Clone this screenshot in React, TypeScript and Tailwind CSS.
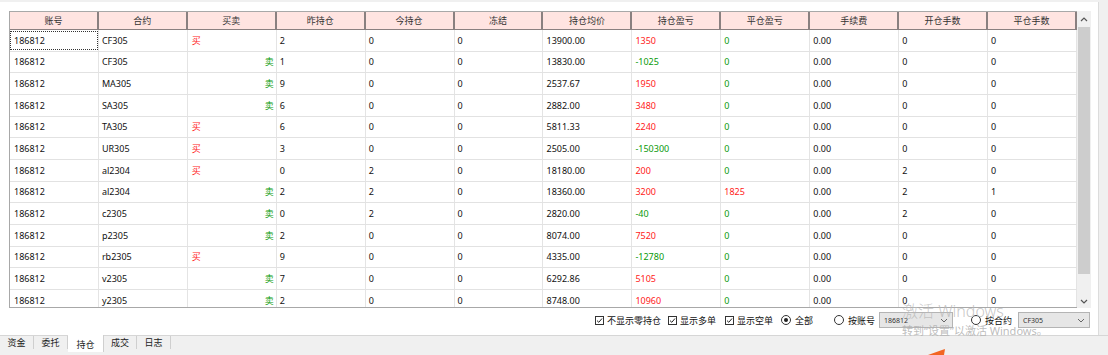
import React from "react";

type Row = {
  acc: string;
  code: string;
  side: "买" | "卖";
  yd: string;
  td: string;
  frz: string;
  avg: string;
  pnl: string;
  cpnl: string;
  fee: string;
  open: string;
  close: string;
};

const rows: Row[] = [
  { acc: "186812", code: "CF305", side: "买", yd: "2", td: "0", frz: "0", avg: "13900.00", pnl: "1350", cpnl: "0", fee: "0.00", open: "0", close: "0" },
  { acc: "186812", code: "CF305", side: "卖", yd: "1", td: "0", frz: "0", avg: "13830.00", pnl: "-1025", cpnl: "0", fee: "0.00", open: "0", close: "0" },
  { acc: "186812", code: "MA305", side: "卖", yd: "9", td: "0", frz: "0", avg: "2537.67", pnl: "1950", cpnl: "0", fee: "0.00", open: "0", close: "0" },
  { acc: "186812", code: "SA305", side: "卖", yd: "6", td: "0", frz: "0", avg: "2882.00", pnl: "3480", cpnl: "0", fee: "0.00", open: "0", close: "0" },
  { acc: "186812", code: "TA305", side: "买", yd: "6", td: "0", frz: "0", avg: "5811.33", pnl: "2240", cpnl: "0", fee: "0.00", open: "0", close: "0" },
  { acc: "186812", code: "UR305", side: "买", yd: "3", td: "0", frz: "0", avg: "2505.00", pnl: "-150300", cpnl: "0", fee: "0.00", open: "0", close: "0" },
  { acc: "186812", code: "al2304", side: "买", yd: "0", td: "2", frz: "0", avg: "18180.00", pnl: "200", cpnl: "0", fee: "0.00", open: "2", close: "0" },
  { acc: "186812", code: "al2304", side: "卖", yd: "2", td: "2", frz: "0", avg: "18360.00", pnl: "3200", cpnl: "1825", fee: "0.00", open: "2", close: "1" },
  { acc: "186812", code: "c2305", side: "卖", yd: "0", td: "2", frz: "0", avg: "2820.00", pnl: "-40", cpnl: "0", fee: "0.00", open: "2", close: "0" },
  { acc: "186812", code: "p2305", side: "卖", yd: "2", td: "0", frz: "0", avg: "8074.00", pnl: "7520", cpnl: "0", fee: "0.00", open: "0", close: "0" },
  { acc: "186812", code: "rb2305", side: "买", yd: "9", td: "0", frz: "0", avg: "4335.00", pnl: "-12780", cpnl: "0", fee: "0.00", open: "0", close: "0" },
  { acc: "186812", code: "v2305", side: "卖", yd: "7", td: "0", frz: "0", avg: "6292.86", pnl: "5105", cpnl: "0", fee: "0.00", open: "0", close: "0" },
  { acc: "186812", code: "y2305", side: "卖", yd: "2", td: "0", frz: "0", avg: "8748.00", pnl: "10960", cpnl: "0", fee: "0.00", open: "0", close: "0" },
];

const headers = ["账号", "合约", "买卖", "昨持仓", "今持仓", "冻结", "持仓均价", "持仓盈亏", "平仓盈亏", "手续费", "开仓手数", "平仓手数"];

const RED = "text-[#ff1a1a]";
const GREEN = "text-[#0a9a0a]";

function Cell({ children, className = "" }: { children?: React.ReactNode; className?: string }) {
  return (
    <div className={`flex items-center border-r border-[#e4e4e4] pl-[3px] overflow-hidden whitespace-nowrap ${className}`}>
      {children}
    </div>
  );
}

function CheckBox({ label, width }: { label: string; width: string }) {
  return (
    <div className={`flex items-center shrink-0 ${width}`}>
      <div className="w-[9px] h-[9px] border border-[#333] bg-white flex items-center justify-center">
        <svg width="7" height="7" viewBox="0 0 7 7">
          <path d="M1 3.6 L2.8 5.3 L6 1.5" stroke="#222" strokeWidth="1" fill="none" />
        </svg>
      </div>
      <span className="ml-[3px] text-[9px] text-[#111] leading-none">{label}</span>
    </div>
  );
}

function Radio({ label, width, checked }: { label: string; width: string; checked?: boolean }) {
  return (
    <div className={`flex items-center shrink-0 ${width}`}>
      <div className="w-[10px] h-[10px] rounded-full border border-[#333] bg-white flex items-center justify-center">
        {checked ? <div className="w-[4px] h-[4px] rounded-full bg-[#222]" /> : null}
      </div>
      <span className="ml-[4px] text-[9px] text-[#111] leading-none">{label}</span>
    </div>
  );
}

function Select({ value, width }: { value: string; width: string }) {
  return (
    <div className={`flex items-center justify-between shrink-0 h-[16px] bg-[#e6e6e6] border border-[#b4b4b4] pl-[4px] pr-[4px] ${width}`}>
      <span className="text-[7px] text-[#333] leading-none">{value}</span>
      <svg width="8" height="5" viewBox="0 0 8 5">
        <path d="M1 1 L4 4 L7 1" stroke="#666" strokeWidth="1" fill="none" />
      </svg>
    </div>
  );
}

export default function App() {
  return (
    <div className="relative w-[1108px] h-[355px] overflow-hidden bg-[#f0f0f0] font-['Noto_Sans','Noto_Sans_CJK_SC',sans-serif]">
      <div className="pt-[2px] h-[335px] flex">
        <div className="w-[1099px] h-[333px] bg-white border-r border-[#dcdcdc] flex flex-col">
          {/* grid */}
          <div className="flex ml-[9px] mt-[9px] h-[297px]">
            <div className="w-[1068px] h-[297px] flex flex-col border-l border-b border-t border-[#a8a8a8] overflow-hidden">
              <div className="grid grid-cols-[repeat(12,1fr)] h-[18px] shrink-0 bg-[#ffe4e1] border-b border-[#8a8080]">
                {headers.map((h) => (
                  <div key={h} className="flex items-center justify-center border-r-2 border-[#8a8080] text-[9px] text-[#333] leading-none">
                    {h}
                  </div>
                ))}
              </div>
              <div className="flex flex-col">
                {rows.map((r, i) => {
                  const neg = r.pnl.startsWith("-");
                  return (
                    <div key={i} className="grid grid-cols-[repeat(12,1fr)] h-[21.67px] shrink-0 border-b border-[#e2e2e2] text-[9px] text-[#111] leading-none">
                      <Cell className="pl-[1px] relative">
                        {i === 0 ? <div className="absolute left-[0px] top-[1px] right-[0px] bottom-[1px] border border-dotted border-[#333]" /> : null}
                        <span className="pl-[1px]">{r.acc}</span>
                      </Cell>
                      <Cell>{r.code}</Cell>
                      {r.side === "买" ? (
                        <Cell className="pl-[4px]">
                          <span className={RED}>买</span>
                        </Cell>
                      ) : (
                        <Cell className="justify-end pr-[2px]">
                          <span className={GREEN}>卖</span>
                        </Cell>
                      )}
                      <Cell>{r.yd}</Cell>
                      <Cell>{r.td}</Cell>
                      <Cell>{r.frz}</Cell>
                      <Cell>{r.avg}</Cell>
                      <Cell>
                        <span className={neg ? GREEN : RED}>{r.pnl}</span>
                      </Cell>
                      <Cell>
                        <span className={r.cpnl === "0" ? GREEN : RED}>{r.cpnl}</span>
                      </Cell>
                      <Cell>{r.fee}</Cell>
                      <Cell>{r.open}</Cell>
                      <Cell>{r.close}</Cell>
                    </div>
                  );
                })}
              </div>
            </div>
            {/* scrollbar */}
            <div className="w-[14px] h-[297px] bg-[#f0f0f0] flex flex-col">
              <div className="h-[16px] flex items-center justify-center shrink-0">
                <svg width="8" height="5" viewBox="0 0 8 5">
                  <path d="M1 4 L4 1 L7 4" stroke="#555" strokeWidth="1.2" fill="none" />
                </svg>
              </div>
              <div className="mx-[1px] h-[247px] bg-[#cdcdcd] shrink-0" />
              <div className="flex-1" />
              <div className="h-[14px] flex items-center justify-center shrink-0">
                <svg width="8" height="5" viewBox="0 0 8 5">
                  <path d="M1 1 L4 4 L7 1" stroke="#555" strokeWidth="1.2" fill="none" />
                </svg>
              </div>
            </div>
          </div>
          {/* controls */}
          <div className="flex items-center pl-[595px] mt-[4px] h-[16px]">
            <CheckBox label="不显示零持仓" width="w-[73px]" />
            <CheckBox label="显示多单" width="w-[57px]" />
            <CheckBox label="显示空单" width="w-[56px]" />
            <Radio label="全部" width="w-[53px]" checked />
            <Radio label="按账号" width="w-[45px]" />
            <Select value="186812" width="w-[74px]" />
            <div className="w-[18px] shrink-0" />
            <Radio label="按合约" width="w-[47px]" />
            <Select value="CF305" width="w-[72px]" />
          </div>
        </div>
      </div>
      {/* tabs */}
      <div className="h-[20px] border-t border-[#d6d6d6] flex items-start text-[9px] text-[#222] leading-none">
        <div className="w-[34px] h-[13px] flex items-center justify-center border-r border-[#cfcfcf]">资金</div>
        <div className="w-[34px] h-[13px] flex items-center justify-center border-r border-[#cfcfcf]">委托</div>
        <div className="w-[36px] h-[17px] -mt-[1px] flex items-center justify-center bg-white border-r border-[#cfcfcf] pt-[1px]">持仓</div>
        <div className="w-[33px] h-[13px] flex items-center justify-center border-r border-[#cfcfcf]">成交</div>
        <div className="w-[34px] h-[13px] flex items-center justify-center border-r border-[#cfcfcf]">日志</div>
      </div>
      {/* windows activation watermark overlay */}
      <div className="absolute left-[902px] top-[303px] text-[16px] font-light text-[#b8b8b8]/80 leading-none whitespace-nowrap pointer-events-none">
        激活 Windows
      </div>
      <div className="absolute left-[902px] top-[325px] text-[11px] text-[#b0b0b0]/85 leading-none whitespace-nowrap pointer-events-none">
        转到“设置”以激活 Windows。
      </div>
      <svg className="absolute left-[928px] top-[349px]" width="18" height="6" viewBox="0 0 18 6">
        <path d="M0 6 L14 1 L17 0 L16 6 Z" fill="#f26522" />
      </svg>
    </div>
  );
}
